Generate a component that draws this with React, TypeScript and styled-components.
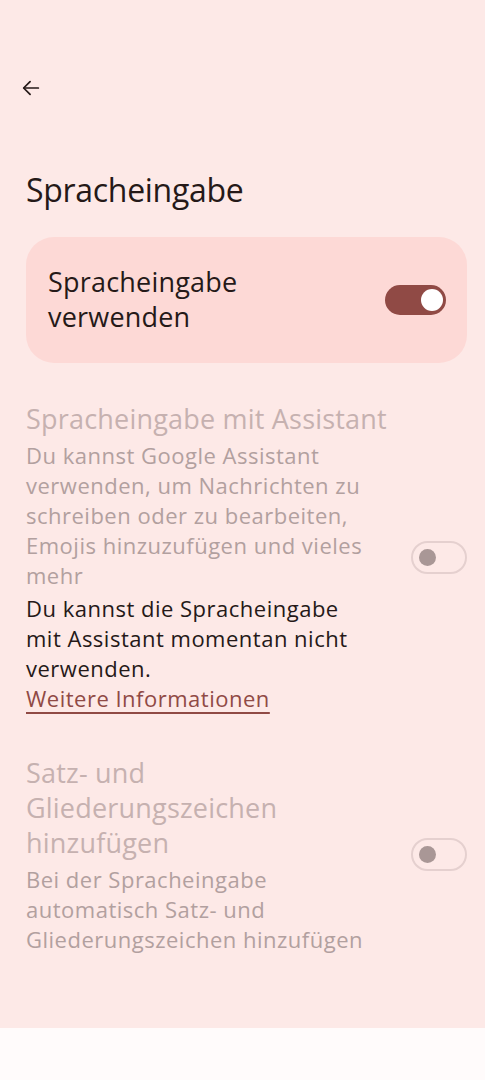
import styled, { createGlobalStyle } from "styled-components"

const colors = {
    page: "#fde9e7",
    card: "#fdd9d6",
    ink: "#251918",
    dim: "#c6b1b0",
    dimText: "#b2a09f",
    accent: "#904a45",
    bottom: "#fffbfb",
}

const GlobalStyle = createGlobalStyle`
    html, body {
        margin: 0;
        padding: 0;
        background: ${colors.bottom};
    }
    body {
        font-family: "Open Sans", Roboto, sans-serif;
        color: ${colors.ink};
    }
`

const Screen = styled.div`
    width: 485px;
    height: 1028px;
    background: ${colors.page};
    display: flex;
    flex-direction: column;
    box-sizing: border-box;
`

const TopBar = styled.div`
    height: 64px;
    padding: 56px 0 0 18px;
    display: flex;
    align-items: center;
`

const BackButton = styled.button`
    width: 26px;
    height: 26px;
    padding: 0;
    border: 0;
    background: none;
    display: flex;
    align-items: center;
    justify-content: center;
`

const Title = styled.h1`
    margin: 52px 0 0 26px;
    font-size: 32px;
    font-weight: 400;
    line-height: 36px;
    letter-spacing: -0.3px;
`

const MainCard = styled.div`
    margin: 29px 18px 0 26px;
    height: 126px;
    background: ${colors.card};
    border-radius: 28px;
    display: flex;
    align-items: center;
    justify-content: space-between;
    padding: 0 21px 0 22px;
    box-sizing: border-box;
`

const CardLabel = styled.div`
    font-size: 27px;
    line-height: 35px;
    letter-spacing: 0.2px;
    padding-bottom: 2px;
`

const Row = styled.div<{ $gap: number }>`
    display: flex;
    align-items: center;
    justify-content: space-between;
    gap: 12px;
    margin-top: ${(p) => p.$gap}px;
    padding: 0 18px 0 26px;
`

const RowText = styled.div`
    flex: 1;
    max-width: 350px;
`

const RowTitle = styled.div`
    font-size: 27px;
    line-height: 35px;
    letter-spacing: 0.2px;
    color: ${colors.dim};
    white-space: nowrap;
    margin-bottom: 4px;
`

const RowDesc = styled.div<{ $dim?: boolean }>`
    font-size: 22px;
    line-height: 30px;
    letter-spacing: 0.5px;
    color: ${(p) => (p.$dim ? colors.dimText : colors.ink)};
`

const Notice = styled(RowDesc)`
    margin-top: 3px;
`

const Link = styled.a`
    color: ${colors.accent};
    text-decoration: underline;
    text-underline-offset: 5px;
    text-decoration-thickness: 1.5px;
    font-size: 22px;
    line-height: 30px;
    letter-spacing: 0.5px;
`

const Track = styled.div<{ $on?: boolean }>`
    flex-shrink: 0;
    box-sizing: border-box;
    display: flex;
    align-items: center;
    border-radius: 999px;
    ${(p) =>
        p.$on
            ? `
        width: 61px;
        height: 30px;
        background: ${colors.accent};
        justify-content: flex-end;
        padding-right: 3px;
    `
            : `
        width: 56px;
        height: 33px;
        border: 2px solid #e5d0cf;
        background: transparent;
        justify-content: flex-start;
        padding-left: 6px;
    `}
`

const Thumb = styled.div<{ $on?: boolean }>`
    border-radius: 50%;
    width: ${(p) => (p.$on ? "22px" : "17px")};
    height: ${(p) => (p.$on ? "22px" : "17px")};
    background: ${(p) => (p.$on ? "#ffffff" : "#a99796")};
`

function Toggle({ on }: { on?: boolean }) {
    return (
        <Track $on={on}>
            <Thumb $on={on} />
        </Track>
    )
}

export default function App() {
    return (
        <>
            <GlobalStyle />
            <Screen>
                <TopBar>
                    <BackButton aria-label="Zurück">
                        <svg width="22" height="22" viewBox="0 0 24 24" fill="none" stroke={colors.ink} strokeWidth="1.9" strokeLinecap="round" strokeLinejoin="round">
                            <path d="M20 12H4.5" />
                            <path d="M11 5l-7 7 7 7" />
                        </svg>
                    </BackButton>
                </TopBar>

                <Title>Spracheingabe</Title>

                <MainCard>
                    <CardLabel>
                        Spracheingabe
                        <br />
                        verwenden
                    </CardLabel>
                    <Toggle on />
                </MainCard>

                <Row $gap={38}>
                    <RowText>
                        <RowTitle>Spracheingabe mit Assistant</RowTitle>
                        <RowDesc $dim>
                            Du kannst Google Assistant verwenden, um Nachrichten zu schreiben oder zu bearbeiten, Emojis hinzuzufügen und vieles mehr
                        </RowDesc>
                        <Notice>
                            Du kannst die Spracheingabe mit Assistant momentan nicht verwenden.
                        </Notice>
                        <Link href="#">Weitere Informationen</Link>
                    </RowText>
                    <Toggle />
                </Row>

                <Row $gap={42}>
                    <RowText>
                        <RowTitle>
                            Satz- und
                            <br />
                            Gliederungszeichen
                            <br />
                            hinzufügen
                        </RowTitle>
                        <RowDesc $dim>
                            Bei der Spracheingabe automatisch Satz- und Gliederungszeichen hinzufügen
                        </RowDesc>
                    </RowText>
                    <Toggle />
                </Row>
            </Screen>
        </>
    )
}
